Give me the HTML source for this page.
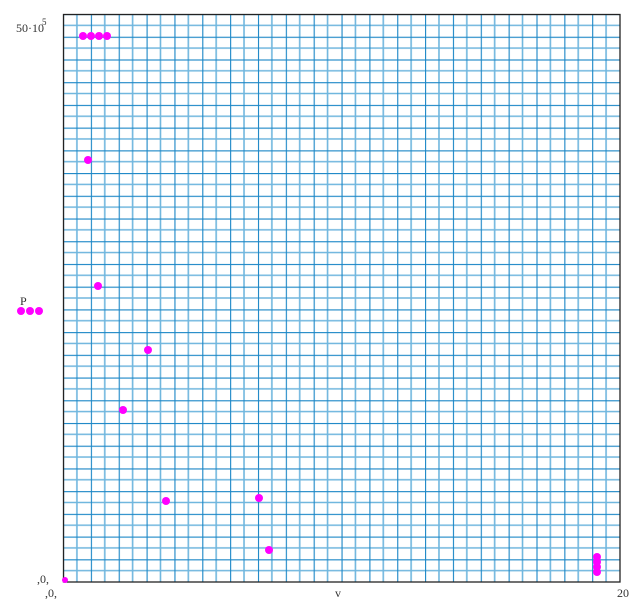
<!DOCTYPE html>
<html><head><style>
html,body{margin:0;padding:0;background:#fff;width:642px;height:600px;overflow:hidden}
svg text{font-family:"Liberation Serif",serif;fill:#333}
</style></head><body>
<svg width="642" height="600" xmlns="http://www.w3.org/2000/svg">
<defs>
<pattern id="g" x="63" y="14" width="27.85" height="22.72" patternUnits="userSpaceOnUse">
<line x1="13.925" y1="0" x2="13.925" y2="22.72" stroke="#6fb6de" stroke-width="1.6"/>
<line x1="0" y1="11.36" x2="27.85" y2="11.36" stroke="#6fb6de" stroke-width="1.6"/>
<line x1="0.5" y1="0" x2="0.5" y2="22.72" stroke="#1a86c6" stroke-width="1.2"/>
<line x1="0" y1="0.5" x2="27.85" y2="0.5" stroke="#1a86c6" stroke-width="1.2"/>
</pattern>
</defs>
<rect x="63" y="14" width="557" height="568" fill="url(#g)"/>
<rect x="63.5" y="14.5" width="556.5" height="567.5" fill="none" stroke="#222" stroke-width="1.3"/>
<g fill="#ff00ff">
<circle cx="83" cy="36" r="4"/><circle cx="91" cy="36" r="4"/><circle cx="99" cy="36" r="4"/><circle cx="107" cy="36" r="4"/>
<circle cx="88" cy="160" r="4"/>
<circle cx="98" cy="286" r="4"/>
<circle cx="148" cy="350" r="4"/>
<circle cx="123" cy="410" r="4"/>
<circle cx="166" cy="501" r="4"/>
<circle cx="259" cy="498" r="4"/>
<circle cx="269" cy="550" r="4"/>
<circle cx="597" cy="557" r="4"/><circle cx="597" cy="562" r="4"/><circle cx="597" cy="567" r="4"/><circle cx="597" cy="572" r="4"/>
<circle cx="65" cy="580" r="3"/>
<circle cx="21" cy="311" r="4"/><circle cx="30" cy="311" r="4"/><circle cx="39" cy="311" r="4"/>
</g>
<text x="16" y="32" font-size="12">50·10</text>
<text x="42" y="25" font-size="9">5</text>
<text x="20" y="305" font-size="12">P</text>
<text x="37" y="583" font-size="12">,0,</text>
<text x="45" y="597" font-size="12">,0,</text>
<text x="335" y="597" font-size="12">v</text>
<text x="617" y="597" font-size="12">20</text>
</svg>
</body></html>
